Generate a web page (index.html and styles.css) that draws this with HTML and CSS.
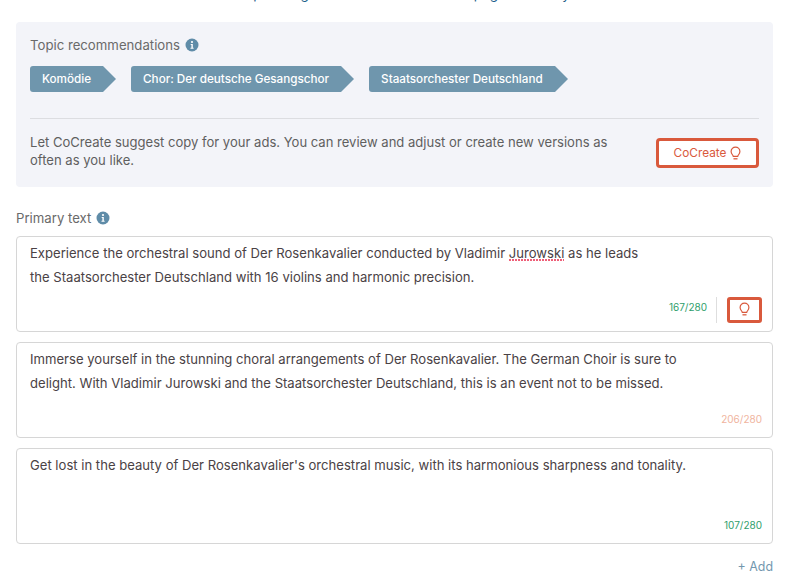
FILE: index.html
```html
<!DOCTYPE html>
<html lang="en">
<head>
<meta charset="utf-8">
<title>Ad copy</title>
<link rel="stylesheet" href="styles.css">
</head>
<body>
<div class="page">
  <p class="clipped">See upcoming ad text makes this whole page feel lively</p>
  <section class="panel">
    <div class="label-row">
      <span>Topic recommendations</span>
      <svg class="info" viewBox="0 0 14 14"><circle cx="7" cy="7" r="6.5" fill="#5f8ca8"/><path d="M5.700 6h2.100v3.800h.8v1H5.500v-1h.9V7h-.7z" fill="#fff"/><circle cx="7" cy="4" r="1.100" fill="#fff"/></svg>
    </div>
    <div class="tags">
      <span class="tag">Komödie</span>
      <span class="tag">Chor: Der deutsche Gesangschor</span>
      <span class="tag">Staatsorchester Deutschland</span>
    </div>
    <div class="suggest">
      <p>Let CoCreate suggest copy for your ads. You can review and adjust or create new versions as often as you like.</p>
      <button class="cocreate">CoCreate
        <svg class="bulb" viewBox="0 0 12 16"><path d="M3.600 11.200C3.400 9.600 1.200 8.600 1.200 5.800a4.800 4.800 0 0 1 9.600 0c0 2.800-2.200 3.800-2.400 5.400z" fill="none" stroke="currentColor" stroke-width="1.300"/><path d="M3.800 13.800h4.400" stroke="currentColor" stroke-width="1.400"/></svg>
      </button>
    </div>
  </section>
  <div class="label-row primary">
    <span>Primary text</span>
    <svg class="info" viewBox="0 0 14 14"><circle cx="7" cy="7" r="6.5" fill="#5f8ca8"/><path d="M5.700 6h2.100v3.800h.8v1H5.500v-1h.9V7h-.7z" fill="#fff"/><circle cx="7" cy="4" r="1.100" fill="#fff"/></svg>
  </div>
  <div class="box first">
    <p>Experience the orchestral sound of Der Rosenkavalier conducted by Vladimir <span class="spell">Jurowski</span> as he leads<br>the Staatsorchester Deutschland with 16 violins and harmonic precision.</p>
    <div class="tools">
      <span class="count ok">167/280</span>
      <span class="divider"></span>
      <button class="bulb-btn"><svg class="bulb" viewBox="0 0 12 16"><path d="M3.600 11.200C3.400 9.600 1.200 8.600 1.200 5.800a4.800 4.800 0 0 1 9.600 0c0 2.800-2.200 3.800-2.400 5.400z" fill="none" stroke="currentColor" stroke-width="1.300"/><path d="M3.800 13.800h4.400" stroke="currentColor" stroke-width="1.400"/></svg></button>
    </div>
  </div>
  <div class="box">
    <p>Immerse yourself in the stunning choral arrangements of Der Rosenkavalier. The German Choir is sure to<br>delight. With Vladimir Jurowski and the Staatsorchester Deutschland, this is an event not to be missed.</p>
    <div class="foot"><span class="count warn">206/280</span></div>
  </div>
  <div class="box">
    <p>Get lost in the beauty of Der Rosenkavalier's orchestral music, with its harmonious sharpness and tonality.</p>
    <div class="foot"><span class="count ok">107/280</span></div>
  </div>
  <div class="add-row"><span class="add">+ Add</span></div>
</div>
</body>
</html>
```
FILE: styles.css
```css
* { box-sizing: border-box; }
html, body { margin: 0; height: 100%; overflow: hidden; background: #fff; }
body { font-family: Inter, "Noto Sans", sans-serif; color: #4a4245; }
.page { padding: 0 14px 0 16px; display: flex; flex-direction: column; position: relative; height: 583px; }
.clipped { position: absolute; top: -14px; left: 0; right: 0; margin: 0; text-align: center; font-size: 13.500px; line-height: 16px; color: #1f5f8b; }
.panel { margin-top: 22px; height: 165px; background: #f3f4f9; border-radius: 4px; padding: 14px 14px 0; }
.label-row { display: flex; align-items: center; gap: 5px; font-size: 13.200px; line-height: 18px; color: #6a6a6a; }
.info { width: 14px; height: 14px; display: block; }
.tags { display: flex; gap: 14px; margin-top: 12px; }
.tag { position: relative; height: 26px; margin-right: 14px; padding: 0 12px; display: flex; align-items: center; background: #6f96ad; color: #fff; font-size: 11.680px; font-weight: 450; border-radius: 3px 0 0 3px; }
.tag::after { content: ""; position: absolute; left: 100%; top: 0; border-left: 13px solid #6f96ad; border-top: 13px solid transparent; border-bottom: 13px solid transparent; }
.suggest { margin-top: 26px; border-top: 1px solid #dcdde1; padding-top: 7px; display: flex; justify-content: space-between; align-items: flex-start; }
.suggest p { margin: 7px 0 0; width: 590px; font-size: 13.050px; line-height: 18px; color: #5f5f5f; }
.cocreate { margin: 12px 0 0; width: 103px; height: 30px; background: #fff; border: 3px solid #d9593c; border-radius: 4px; color: #d9593c; font: 400 11.800px Inter, sans-serif; display: flex; align-items: center; justify-content: center; gap: 4px; padding: 0; }
.bulb { width: 11px; height: 15px; display: block; }
.primary { margin-top: 22px; }
.box { margin-top: 10px; height: 96px; border: 1px solid #d6d6d6; border-radius: 4px; background: #fff; padding: 4px 13px 0; position: relative; }
.primary + .box { margin-top: 9px; }
.box p { margin: 0; font-size: 13.100px; line-height: 24px; color: #4a4245; }
.spell { background-image: repeating-linear-gradient(90deg, #ee5f78 0 2px, transparent 2px 3px); background-size: 100% 2px; background-position: left bottom; background-repeat: no-repeat; }
.foot { position: absolute; right: 10px; bottom: 10px; display: flex; }
.tools { position: absolute; right: 10px; bottom: 8px; height: 26px; display: flex; align-items: center; gap: 9px; }
.count { font-size: 10px; line-height: 16px; }
.tools .count { margin-top: -6px; }
.ok { color: #2f9e6b; }
.warn { color: #f0b49e; }
.divider { width: 1px; height: 26px; background: #dedede; }
.bulb-btn { width: 35px; height: 26px; margin-left: 1px; background: #fff; border: 3px solid #d9593c; border-radius: 3px; color: #d9593c; display: flex; align-items: center; justify-content: center; padding: 0 1px 1px 0; }
.add-row { display: flex; justify-content: flex-end; margin-top: 15px; }
.add { font-size: 12.400px; color: #7397ae; }
```
